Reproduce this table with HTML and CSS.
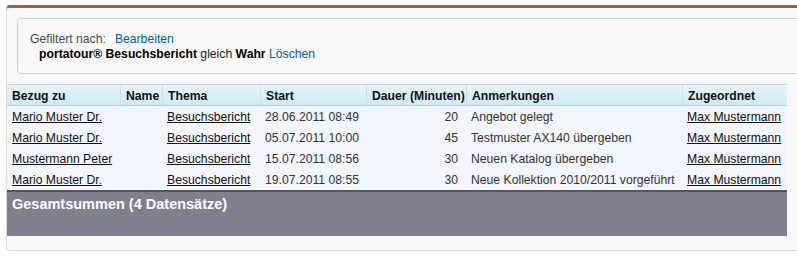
FILE: index.html
```html
<!DOCTYPE html>
<html lang="de">
<head>
<meta charset="utf-8">
<title>Bericht</title>
<link rel="stylesheet" href="styles.css">
</head>
<body>
<div class="panel">
  <div class="filter">
    <div class="filter-line"><span class="label">Gefiltert nach:</span><a class="blue" href="#">Bearbeiten</a></div>
    <div class="filter-cond"><b>portatour® Besuchsbericht</b> gleich <b>Wahr</b> <a class="blue" href="#">Löschen</a></div>
  </div>
  <table class="report">
    <thead>
      <tr>
        <th class="c1">Bezug zu</th>
        <th class="c2">Name</th>
        <th class="c3">Thema</th>
        <th class="c4">Start</th>
        <th class="c5">Dauer (Minuten)</th>
        <th class="c6">Anmerkungen</th>
        <th class="c7">Zugeordnet</th>
      </tr>
    </thead>
    <tbody>
      <tr>
        <td><a href="#">Mario Muster Dr.</a></td>
        <td></td>
        <td><a href="#">Besuchsbericht</a></td>
        <td>28.06.2011 08:49</td>
        <td class="num">20</td>
        <td>Angebot gelegt</td>
        <td><a href="#">Max Mustermann</a></td>
      </tr>
      <tr>
        <td><a href="#">Mario Muster Dr.</a></td>
        <td></td>
        <td><a href="#">Besuchsbericht</a></td>
        <td>05.07.2011 10:00</td>
        <td class="num">45</td>
        <td>Testmuster AX140 übergeben</td>
        <td><a href="#">Max Mustermann</a></td>
      </tr>
      <tr>
        <td><a href="#">Mustermann Peter</a></td>
        <td></td>
        <td><a href="#">Besuchsbericht</a></td>
        <td>15.07.2011 08:56</td>
        <td class="num">30</td>
        <td>Neuen Katalog übergeben</td>
        <td><a href="#">Max Mustermann</a></td>
      </tr>
      <tr>
        <td><a href="#">Mario Muster Dr.</a></td>
        <td></td>
        <td><a href="#">Besuchsbericht</a></td>
        <td>19.07.2011 08:55</td>
        <td class="num">30</td>
        <td>Neue Kollektion 2010/2011 vorgeführt</td>
        <td><a href="#">Max Mustermann</a></td>
      </tr>
    </tbody>
  </table>
  <div class="totals">Gesamtsummen (4 Datensätze)</div>
</div>
</body>
</html>
```

FILE: styles.css
```css
html, body {
  margin: 0;
  padding: 0;
  overflow: hidden;
  background: #ffffff;
}

body {
  font-family: "Liberation Sans", Arial, sans-serif;
  font-size: 12.2px;
  color: #222;
}

.panel {
  margin: 5px 0 0 6px;
  width: 840px;
  background: #f8f8f8;
  border-top: 3px solid #a8574a;
  border-left: 1px solid #dadada;
  border-bottom: 1px solid #dadada;
  border-top-left-radius: 4px;
  border-bottom-left-radius: 4px;
  padding: 10px 0 14px 0;
}

.filter {
  margin: 0 0 10px 10px;
  border: 1px solid #cfcfcf;
  border-radius: 4px;
  background: #f8f8f8;
  padding: 13px 12px 11px 12px;
  line-height: 15px;
}

.filter-line .label {
  color: #4a4a56;
  margin-right: 9px;
}

.filter-cond {
  padding-left: 9px;
  color: #222;
}

.filter-cond b {
  color: #000;
}

a.blue {
  color: #015ba7;
  text-decoration: none;
}

.report {
  width: 780px;
  border-collapse: separate;
  border-spacing: 0;
  table-layout: fixed;
}

.report th,
.report td {
  box-sizing: border-box;
  text-align: left;
  white-space: nowrap;
  overflow: hidden;
}

.report th {
  height: 22px;
  padding: 1px 0 0 5px;
  font-weight: bold;
  color: #111;
  background: linear-gradient(#e4f4fa, #cfebf5);
  border-top: 1px solid #cfd3d6;
  border-bottom: 1px solid #c6cdd1;
  border-left: 1px solid #d0dde2;
}

.report th.c1 { border-left: none; width: 113px; padding-left: 5px; }
.report th.c2 { width: 42px; }
.report th.c3 { width: 98px; }
.report th.c4 { width: 106px; }
.report th.c5 { width: 100px; }
.report th.c6 { width: 216px; }
.report th.c7 { width: 105px; }

.report td {
  height: 21px;
  padding: 0 4px 0 5px;
  background: #f3f6fc;
  color: #333;
}

.report td a {
  color: #111;
  text-decoration: underline;
}

.report td.num {
  text-align: right;
  padding-right: 8px;
}

.totals {
  width: 780px;
  box-sizing: border-box;
  height: 46px;
  background: #7f808b;
  border-top: 2px solid #54545f;
  color: #fff;
  font-weight: bold;
  font-size: 14.5px;
  line-height: 18px;
  padding: 3px 5px;
}
```
